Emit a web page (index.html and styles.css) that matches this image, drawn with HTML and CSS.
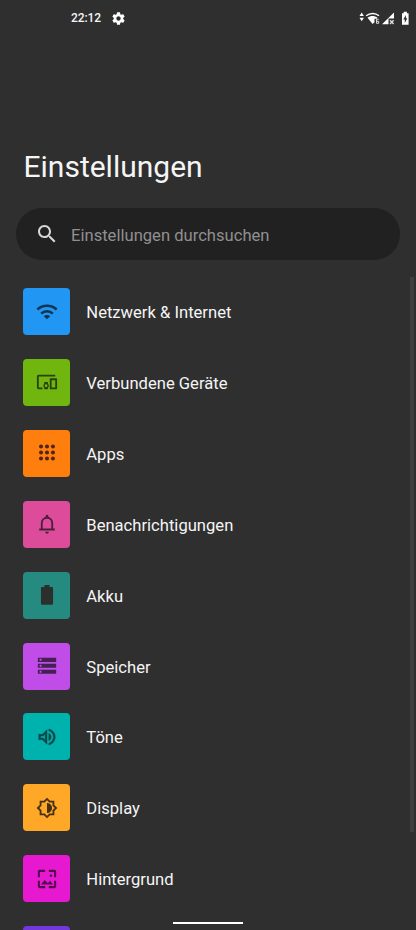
FILE: index.html
```html
<!DOCTYPE html>
<html lang="de">
<head>
<meta charset="utf-8">
<title>Einstellungen</title>
<link rel="stylesheet" href="styles.css">
</head>
<body>
<div class="screen">
  <header class="status">
    <span class="clock">22:12</span>
    <svg class="gear" viewBox="0 0 24 24"><path d="M19.43 12.98c.04-.32.07-.64.07-.98s-.03-.66-.07-.98l2.11-1.65c.19-.15.24-.42.12-.64l-2-3.46c-.12-.22-.39-.3-.61-.22l-2.49 1c-.52-.4-1.08-.73-1.69-.98l-.38-2.65C14.46 2.18 14.25 2 14 2h-4c-.25 0-.46.18-.49.42l-.38 2.65c-.61.25-1.17.59-1.69.98l-2.49-1c-.23-.09-.49 0-.61.22l-2 3.46c-.13.22-.07.49.12.64l2.11 1.65c-.04.32-.07.65-.07.98s.03.66.07.98l-2.11 1.65c-.19.15-.24.42-.12.64l2 3.46c.12.22.39.3.61.22l2.49-1c.52.4 1.08.73 1.69.98l.38 2.65c.03.24.24.42.49.42h4c.25 0 .46-.18.49-.42l.38-2.65c.61-.25 1.17-.59 1.69-.98l2.49 1c.23.09.49 0 .61-.22l2-3.46c.12-.22.07-.49-.12-.64l-2.11-1.65zM12 15.5c-1.93 0-3.5-1.57-3.5-3.5s1.57-3.5 3.5-3.5 3.5 1.57 3.5 3.5-1.57 3.5-3.5 3.5z"/></svg>
    <svg class="signals" viewBox="0 0 52 16">
      <path d="M3.700 2.500 5.900 6H1.500zM1.500 7.800h4.400L3.700 11.300z"/>
      <path class="arc" d="M8.200 5.800C12 2.600 17.400 2.600 21 5.800"/>
      <path d="M9.500 7.800C12.500 5.300 16.500 5.300 19.500 7.800L18.800 8.800H16.500V12.300L14.600 14z"/>
      <path class="thin" d="M20.700 9.300h-2.200v4h2.200v-2h-2"/>
      <path d="M36 2.500V8.500H30.500v5.800H24z"/>
      <path class="thin cross" d="m32 10.300 3.600 3.600m0-3.600L32 13.900"/>
      <path d="M44 3.200h1.700V1.800h3.200v1.400h1.700v11.500H44z"/>
      <path class="bolt" d="M47.900 5 45.300 9.500h1.500v3.400l2.500-4.700h-1.400z"/>
    </svg>
  </header>
  <h1>Einstellungen</h1>
  <div class="search">
    <svg viewBox="0 0 24 24"><path d="M15.500 14h-.79l-.28-.27C15.410 12.590 16 11.110 16 9.500 16 5.910 13.090 3 9.500 3S3 5.910 3 9.500 5.910 16 9.500 16c1.610 0 3.090-.59 4.230-1.570l.27.28v.79l5 4.990L20.490 19l-4.990-5zm-6 0C7.010 14 5 11.990 5 9.500S7.010 5 9.500 5 14 7.010 14 9.500 11.990 14 9.500 14z"/></svg>
    <span>Einstellungen durchsuchen</span>
  </div>
  <ul class="list">
    <li><div class="tile network"><svg viewBox="0 0 24 24"><path class="line wide" d="M1.500 9.300c5.700-5.600 15.300-5.600 21 0M5.700 13.700c3.400-3.400 9.200-3.400 12.600 0"/><path d="M8.500 16.600c2-1.900 5-1.900 7 0L12 20z"/></svg></div><span>Netzwerk &amp; Internet</span></li>
    <li><div class="tile devices"><svg viewBox="0 0 24 24"><path d="M3 6h18V4H3c-1.100 0-2 .9-2 2v12c0 1.100.9 2 2 2h4v-2H3V6zm10 6H9v1.780c-.61.550-1 1.330-1 2.220s.39 1.670 1 2.220V20h4v-1.780c.61-.550 1-1.340 1-2.220s-.39-1.670-1-2.220V12zm-2 5.500c-.83 0-1.500-.67-1.500-1.500s.67-1.500 1.500-1.500 1.500.67 1.500 1.500-.67 1.500-1.500 1.500zM22 8h-6c-.5 0-1 .5-1 1v10c0 .5.5 1 1 1h6c.5 0 1-.5 1-1V9c0-.5-.5-1-1-1zm-1 10h-4v-8h4v8z"/></svg></div><span>Verbundene Geräte</span></li>
    <li><div class="tile apps"><svg viewBox="0 0 24 24"><circle cx="5.500" cy="5" r="2.200"/><circle cx="12" cy="5" r="2.200"/><circle cx="18.500" cy="5" r="2.200"/><circle cx="5.500" cy="11.500" r="2.200"/><circle cx="12" cy="11.500" r="2.200"/><circle cx="18.500" cy="11.500" r="2.200"/><circle cx="5.500" cy="18" r="2.200"/><circle cx="12" cy="18" r="2.200"/><circle cx="18.500" cy="18" r="2.200"/></svg></div><span>Apps</span></li>
    <li><div class="tile alerts"><svg viewBox="0 0 24 24"><path d="M12 22.500c1.100 0 2-.9 2-2h-4c0 1.100.9 2 2 2z"/><path class="line" d="M3.500 18h17M6.300 18v-6.800c0-3.300 2.300-6 5.700-6s5.700 2.700 5.700 6V18"/><path d="M10.500 5V3.500a1.500 1.500 0 0 1 3 0V5z"/></svg></div><span>Benachrichtigungen</span></li>
    <li><div class="tile battery"><svg viewBox="0 0 24 24"><path d="M17.200 3.300H14.800V1H9.200v2.300H6.800c-.8 0-1.400.6-1.400 1.400v16.600c0 .8.6 1.400 1.400 1.400h10.400c.8 0 1.400-.6 1.400-1.400V4.700c0-.8-.6-1.400-1.400-1.400z"/></svg></div><span>Akku</span></li>
    <li><div class="tile storage"><svg viewBox="0 0 24 24"><path d="M2 20.500h20V16H2v4.500zm2-3.200h2v2H4v-2zM2 3v4.500h20V3H2zm4 3.200H4v-2h2v2zM2 14h20V9.500H2V14zm2-3.300h2v2H4v-2z"/></svg></div><span>Speicher</span></li>
    <li><div class="tile sound"><svg viewBox="0 0 24 24"><path class="heavy" d="M3 9v6h4l5 5V4L7 9H3zm7-.17v6.340L7.830 13H5v-2h2.830L10 8.830zM16.500 12c0-1.770-1.020-3.290-2.500-4.030v8.050c1.480-.73 2.500-2.250 2.500-4.020zM14 3.230v2.060c2.890.86 5 3.540 5 6.710s-2.110 5.850-5 6.710v2.060c4.010-.91 7-4.490 7-8.770s-2.990-7.860-7-8.770z"/></svg></div><span>Töne</span></li>
    <li><div class="tile display"><svg viewBox="0 0 24 24"><path class="line" d="M19 9.100V5h-4.100L12 2.100 9.100 5H5v4.100L2.100 12 5 14.900V19h4.100l2.900 2.900 2.900-2.900H19v-4.100l2.900-2.900z"/><path d="M12 6.500v11c3.030 0 5.500-2.470 5.500-5.500S15.030 6.500 12 6.500z"/></svg></div><span>Display</span></li>
    <li><div class="tile wallpaper"><svg viewBox="0 0 24 24"><path d="M4.300 4.300H10V2H4c-1.100 0-2 .9-2 2v6h2.300V4.300zM9.500 13.200 5.500 18h13l-3.200-4.200-2.300 2.700zM17.500 8.500c0-.83-.67-1.300-1.300-1.300s-1.300.47-1.300 1.300.67 1.300 1.300 1.300 1.300-.47 1.300-1.300zM20 2h-6v2.300h5.700V10H22V4c0-1.100-.9-2-2-2zm-.3 17.700H14V22h6c1.100 0 2-.9 2-2v-6h-2.300v5.700zM4.300 14H2v6c0 1.100.9 2 2 2h6v-2.300H4.300V14z"/></svg></div><span>Hintergrund</span></li>
    <li><div class="tile next"></div></li>
  </ul>
  <div class="scrollbar"></div>
  <div class="home"></div>
</div>
</body>
</html>
```

FILE: styles.css
```css
* { box-sizing: border-box; }
body { margin: 0; background: #2f2f2f; font-family: Roboto, "Liberation Sans", sans-serif; color: #f5f5f5; }
.screen { position: relative; height: 930px; overflow: hidden; }
.status { display: flex; align-items: center; height: 36px; padding: 0 6px 0 71px; }
.clock { font-size: 12px; font-weight: 500; line-height: 37px; letter-spacing: -.1px; }
.gear { width: 15px; height: 15px; margin-left: 10px; fill: #fff; }
.signals { width: 52px; height: 16px; margin-left: auto; fill: #fff; }
.thin { fill: none; stroke: #ddd; stroke-width: 1; }
.cross { stroke-width: 1.400; }
.arc { fill: none; stroke: #fff; stroke-width: 1.500; }
.bolt { fill: #2f2f2f; }
h1 { margin: 113px 0 0 23.500px; font-size: 30px; line-height: 36px; font-weight: 400; }
.search { display: flex; align-items: center; height: 52px; margin: 23px 16px 0; padding-left: 19px; border-radius: 26px; background: #212121; color: #909090; font-size: 16.600px; }
.search svg { width: 24px; height: 24px; margin-right: 12px; fill: #d8d8d8; }
.search span, .list span { padding-top: 2px; }
.list { list-style: none; margin: 28px 0 0; padding: 0 0 0 23.300px; display: flex; flex-direction: column; gap: 23.920px; }
.list li { display: flex; align-items: center; height: 47px; gap: 16px; font-size: 16.600px; }
.tile { display: flex; align-items: center; justify-content: center; width: 47px; height: 47px; border-radius: 4px; }
.tile svg { width: 22px; height: 22px; fill: currentColor; }
.line { fill: none; stroke: currentColor; stroke-width: 2; }
.wide { stroke-width: 2.800; }
.heavy { stroke: currentColor; stroke-width: .5; }
.network { background: #2196f3; color: #103553; }
.devices { background: #71b60f; color: #2a4012; }
.apps { background: #ff7f0e; color: #522414; }
.alerts { background: #dc4c9b; color: #4b203b; }
.battery { background: #258a80; color: #2b302e; }
.storage { background: #c04de8; color: #452052; }
.sound { background: #00b2ae; color: #0b484a; }
.display { background: #ffa726; color: #463014; }
.wallpaper { background: #e619d0; color: #530f4b; }
.next { background: #7338dc; }
.scrollbar { position: absolute; right: 2px; top: 277px; width: 4px; height: 555px; background: #3f3f3f; }
.home { position: absolute; left: 173px; top: 922px; width: 70px; height: 2px; background: #fff; }
```
